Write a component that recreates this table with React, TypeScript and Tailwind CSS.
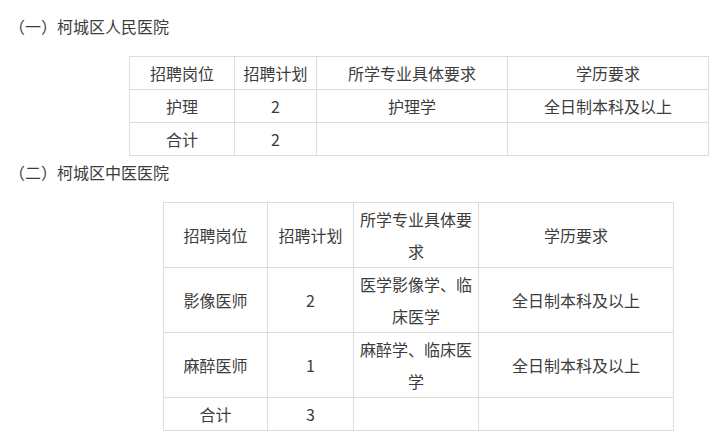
import React from "react";

const cell =
  "border border-[#dddddd] px-[5px] py-0 text-center align-middle leading-[32px] font-normal";

type Row = string[];

function Section({
  title,
  cols,
  rows,
  tableClass,
}: {
  title: string;
  cols: number[];
  rows: Row[];
  tableClass: string;
}) {
  return (
    <div>
      <p className="leading-[32px] pl-[9px]">{title}</p>
      <table className={`table-fixed border-collapse mt-[14px] ${tableClass}`}>
        <colgroup>
          {cols.map((w, i) => (
            <col key={i} style={{ width: w }} />
          ))}
        </colgroup>
        <tbody>
          {rows.map((r, i) => (
            <tr key={i}>
              {r.map((c, j) => (
                <td key={j} className={cell}>
                  {c}
                </td>
              ))}
            </tr>
          ))}
        </tbody>
      </table>
    </div>
  );
}

export default function App() {
  return (
    <div
      className="w-[719px] h-[437px] bg-white text-[16px] text-[#3c3c3c] pt-[10px] overflow-hidden"
      style={{ fontFamily: '"Noto Sans CJK SC", "Noto Sans", sans-serif' }}
    >
      <Section
        title="（一）柯城区人民医院"
        cols={[105, 82, 191, 201]}
        tableClass="w-[579px] ml-[129px]"
        rows={[
          ["招聘岗位", "招聘计划", "所学专业具体要求", "学历要求"],
          ["护理", "2", "护理学", "全日制本科及以上"],
          ["合计", "2", "", ""],
        ]}
      />
      <Section
        title="（二）柯城区中医医院"
        cols={[104, 86, 125, 195]}
        tableClass="w-[510px] ml-[163px]"
        rows={[
          ["招聘岗位", "招聘计划", "所学专业具体要求", "学历要求"],
          ["影像医师", "2", "医学影像学、临床医学", "全日制本科及以上"],
          ["麻醉医师", "1", "麻醉学、临床医学", "全日制本科及以上"],
          ["合计", "3", "", ""],
        ]}
      />
    </div>
  );
}
